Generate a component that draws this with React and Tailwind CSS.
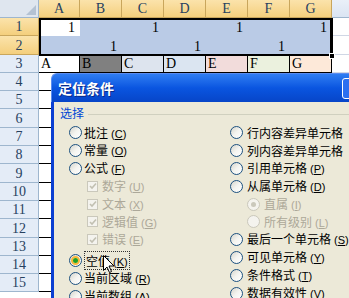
import React from 'react';

const CJK = "font-['Noto_Sans_CJK_SC','Noto_Sans',sans-serif]";
const SERIF = "font-['Liberation_Serif',serif]";

const colWidths = ['w-[41px]', 'w-[42px]', 'w-[42px]', 'w-[42px]', 'w-[42px]', 'w-[42px]', 'w-[42px]'];
const colNames = ['A', 'B', 'C', 'D', 'E', 'F', 'G'];
const row3Fills = ['bg-white', 'bg-[#808080]', 'bg-[#dde4ee]', 'bg-[#dbe5f1]', 'bg-[#f2dcdb]', 'bg-[#ebf1de]', 'bg-[#fde9d9]'];

const SEL = 'bg-[#bacbe6]';

// row 1 & 2 values, by column index
const row1 = { 0: '1', 2: '1', 4: '1', 6: '1' };
const row2 = { 1: '1', 3: '1', 5: '1' };

const RowHead = ({ n, selected }) => (
  <div
    className={`flex w-[39px] shrink-0 items-end justify-center border-b border-r pb-[1px] text-[14px] leading-none ${SERIF} ${
      selected
        ? 'border-[#c9a65c] bg-gradient-to-b from-[#fbe3ab] to-[#f4cf7d] text-[#27415f]'
        : 'border-[#9eb6ce] bg-[#e4ecf7] text-[#27415f]'
    }`}
  >
    {n}
  </div>
);

const SheetRow = ({ n }) => {
  let cells;
  if (n === 1 || n === 2) {
    const vals = n === 1 ? row1 : row2;
    cells = colWidths.map((w, i) => (
      <div
        key={i}
        className={`${w} flex shrink-0 items-end justify-end pr-[5px] pb-[1px] text-[14px] leading-none ${SERIF} ${
          n === 1 && i === 0 ? 'bg-white' : SEL
        }`}
      >
        {vals[i]}
      </div>
    ));
  } else if (n === 3) {
    cells = colWidths.map((w, i) => (
      <div
        key={i}
        className={`${w} flex shrink-0 items-end border-b border-r border-black pl-[2px] pb-[1px] text-[14px] leading-none text-black ${SERIF} ${row3Fills[i]}`}
      >
        {colNames[i]}
      </div>
    ));
  } else {
    cells = colWidths.map((w, i) => (
      <div
        key={i}
        className={`${w} shrink-0 border-b border-r bg-white ${i === 0 ? 'border-black' : 'border-[#d0d7e5]'}`}
      />
    ));
  }
  return (
    <div className="flex h-[18.3px]">
      <RowHead n={n} selected={n <= 2} />
      {cells}
      <div className="flex-1 border-b border-[#d0d7e5] bg-white" />
    </div>
  );
};

const Radio = ({ checked, disabled, hover }) => (
  <span
    className={`relative flex h-[13px] w-[13px] shrink-0 items-center justify-center rounded-full border ${
      disabled ? 'border-[#cac8bb] bg-[#f4f3ee]' : 'border-[#1c5180] bg-gradient-to-br from-[#d6d5cc] via-[#f4f4f0] to-white'
    }`}
  >
    {hover && <span className="absolute inset-[1px] rounded-full border-2 border-[#f8b636]" />}
    {checked && (
      <span className={`relative h-[5px] w-[5px] rounded-full ${disabled ? 'bg-[#cac8bb]' : 'bg-[#21a121]'}`} />
    )}
  </span>
);

const Check = () => (
  <span className="flex h-[11px] w-[11px] shrink-0 items-center justify-center border border-[#cac8bb] bg-[#f4f3ee]">
    <svg width="8" height="8" viewBox="0 0 8 8">
      <path d="M1 4 L3 6 L7 1.5" fill="none" stroke="#c2c0b2" strokeWidth="1.6" />
    </svg>
  </span>
);

const Label = ({ text, k, disabled }) => (
  <span className={`whitespace-nowrap text-[12px] ${disabled ? 'text-[#aca899]' : 'text-black'}`}>
    {text}
    {k && (
      <span className="ml-[3px] font-['Liberation_Sans',sans-serif] text-[11px]">
        (<u>{k}</u>)
      </span>
    )}
  </span>
);

const leftItems = [
  { t: '批注', k: 'C' },
  { t: '常量', k: 'O' },
  { t: '公式', k: 'F' },
  { t: '数字', k: 'U', cb: true },
  { t: '文本', k: 'X', cb: true },
  { t: '逻辑值', k: 'G', cb: true },
  { t: '错误', k: 'E', cb: true },
  { t: '空值', k: 'K', sel: true },
  { t: '当前区域', k: 'R' },
  { t: '当前数组', k: 'A' },
];

const rightItems = [
  { t: '行内容差异单元格' },
  { t: '列内容差异单元格' },
  { t: '引用单元格', k: 'P' },
  { t: '从属单元格', k: 'D' },
  { t: '直属', k: 'I', sub: true, checked: true },
  { t: '所有级别', k: 'L', sub: true },
  { t: '最后一个单元格', k: 'S' },
  { t: '可见单元格', k: 'Y' },
  { t: '条件格式', k: 'T' },
  { t: '数据有效性', k: 'V' },
];

const Dialog = () => (
  <div className={`absolute left-[51px] top-[73px] flex h-[240px] w-[330px] flex-col ${CJK}`}>
    {/* title bar */}
    <div className="flex h-[29px] shrink-0 items-center rounded-tl-[6px] border-l border-t border-[#5b8cf0] bg-gradient-to-b from-[#2f7df2] via-[#0a55e0] to-[#0745c8] pl-[6px]">
      <span className="text-[14px] font-bold text-white [text-shadow:1px_1px_0_#0a2a8a]">定位条件</span>
      <span className="ml-auto mr-[18px] h-[21px] w-[21px] rounded-[3px] border border-white bg-[#2c6ff0]" />
    </div>
    {/* body */}
    <div className="flex flex-1 flex-col border-l-[3px] border-[#0b3fd2] bg-[#ece9d8]">
      <div className="flex h-[22px] shrink-0 items-center pl-[6px]">
        <span className="text-[12px] text-[#0046d5]">选择</span>
        <span className="ml-[4px] mt-[2px] h-px flex-1 bg-[#d0d0bf]" />
      </div>
      <div className="flex">
        <div className="flex w-[176px] shrink-0 flex-col pl-[15px]">
          {leftItems.map((it) => (
            <div
              key={it.t}
              className={`flex h-[17.8px] items-center ${it.cb ? 'gap-[4px] pl-[18px]' : 'gap-[2px]'} ${it.sel ? 'mt-[3px]' : ''}`}
            >
              {it.cb ? <Check /> : <Radio checked={it.sel} hover={it.sel} />}
              {it.sel ? (
                <span className="relative border border-dotted border-[#333] px-[1px] leading-[14px]">
                  <Label text={it.t} k={it.k} />
                </span>
              ) : (
                <Label text={it.t} k={it.k} disabled={it.cb} />
              )}
            </div>
          ))}
        </div>
        <div className="flex flex-col">
          {rightItems.map((it) => (
            <div
              key={it.t}
              className={`flex h-[17.8px] items-center ${it.sub ? 'gap-[4px] pl-[17px]' : 'gap-[4px]'}`}
            >
              <Radio disabled={it.sub} checked={it.checked} />
              <Label text={it.t} k={it.k} disabled={it.sub} />
            </div>
          ))}
        </div>
      </div>
    </div>
  </div>
);

const Cursor = () => (
  <svg className="absolute left-[103px] top-[255px]" width="12" height="19" viewBox="0 0 12 19">
    <path d="M0.5 0.5 L0.5 15.5 L4 12 L6.5 17.5 L8.5 16.5 L6 11 L11 11 Z" fill="white" stroke="black" strokeWidth="1" />
  </svg>
);

export default function App() {
  return (
    <div className="relative h-[298px] w-[349px] overflow-hidden bg-white">
      {/* column headers */}
      <div className="flex h-[18px]">
        <div className="relative w-[39px] shrink-0 border-b border-r border-[#9eb6ce] bg-[#dfe6ef]">
          <svg className="absolute bottom-[2px] right-[2px]" width="10" height="10" viewBox="0 0 10 10">
            <path d="M10 0 L10 10 L0 10 Z" fill="#b4c2d3" />
          </svg>
        </div>
        {colWidths.map((w, i) => (
          <div
            key={i}
            className={`${w} flex shrink-0 items-end justify-center border-b border-r border-[#c9a65c] bg-gradient-to-b from-[#fbe3ab] to-[#f4cf7d] pb-[1px] text-[14px] leading-none text-[#27415f] ${SERIF}`}
          >
            {colNames[i]}
          </div>
        ))}
        <div className="flex-1 border-b border-[#9eb6ce] bg-gradient-to-b from-[#eaf0f8] to-[#dbe5f3]" />
      </div>

      {Array.from({ length: 15 }, (_, i) => (
        <SheetRow key={i} n={i + 1} />
      ))}

      {/* selection A1:G2 */}
      <div className="pointer-events-none absolute left-[39px] top-[18px] h-[38px] w-[294px] border-2 border-r-[3px] border-black" />
      <div className="absolute left-[329px] top-[53px] h-[6px] w-[6px] border border-white bg-black" />

      <Dialog />
      <Cursor />
    </div>
  );
}
